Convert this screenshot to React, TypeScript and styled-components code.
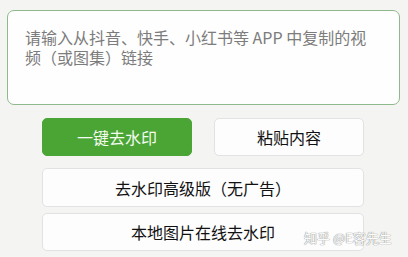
import styled, { createGlobalStyle } from "styled-components";

const GlobalStyle = createGlobalStyle`
  html, body {
    margin: 0;
    padding: 0;
    background: #f4f5f3;
    font-family: "Noto Sans CJK SC", "Noto Sans", sans-serif;
  }
`;

const Page = styled.div`
  position: relative;
  width: 408px;
  height: 257px;
  padding: 10px 8px 0 7px;
  box-sizing: border-box;
  overflow: hidden;
`;

const Input = styled.textarea`
  display: block;
  width: 393px;
  height: 95px;
  box-sizing: border-box;
  margin: 0;
  padding: 16px 28px 0 17px;
  border: 1px solid #8fb98c;
  border-radius: 7px;
  background: #fefefe;
  resize: none;
  overflow: hidden;
  outline: none;
  font-family: "Noto Sans CJK SC", sans-serif;
  font-size: 16px;
  line-height: 20px;
  color: #333;
  &::placeholder {
    color: #7c7c7c;
  }
`;

const Buttons = styled.div`
  width: 322px;
  margin: 13px 0 0 35px;
  display: flex;
  flex-direction: column;
`;

const Row = styled.div<{ $gap: number }>`
  display: flex;
  gap: 22px;
  margin-bottom: ${(p) => p.$gap}px;
`;

const Button = styled.button<{ $primary?: boolean; $h?: number }>`
  flex: 1;
  height: ${(p) => p.$h ?? 38}px;
  box-sizing: border-box;
  border-radius: 5px;
  border: 1px solid ${(p) => (p.$primary ? "#4aa535" : "#e2e2e2")};
  background: ${(p) => (p.$primary ? "#4aa535" : "#fdfdfd")};
  color: ${(p) => (p.$primary ? "#f4fbf1" : "#111")};
  font-family: "Noto Sans CJK SC", sans-serif;
  font-size: 16px;
  padding: 0;
  cursor: pointer;
`;

const Watermark = styled.div`
  position: absolute;
  left: 304px;
  top: 228px;
  font-family: "Noto Sans CJK SC", sans-serif;
  font-size: 13px;
  color: #fbfbfb;
  text-shadow: 0 0 1px #8a8a8a, 0 0 1px #8a8a8a;
  white-space: nowrap;
`;

export default function App() {
  return (
    <>
      <GlobalStyle />
      <Page>
        <Input placeholder="请输入从抖音、快手、小红书等 APP 中复制的视频（或图集）链接" />
        <Buttons>
          <Row $gap={12}>
            <Button $primary>一键去水印</Button>
            <Button>粘贴内容</Button>
          </Row>
          <Row $gap={6}>
            <Button $h={39}>去水印高级版（无广告）</Button>
          </Row>
          <Row $gap={0}>
            <Button>本地图片在线去水印</Button>
          </Row>
        </Buttons>
        <Watermark>知乎 @E客先生</Watermark>
      </Page>
    </>
  );
}
